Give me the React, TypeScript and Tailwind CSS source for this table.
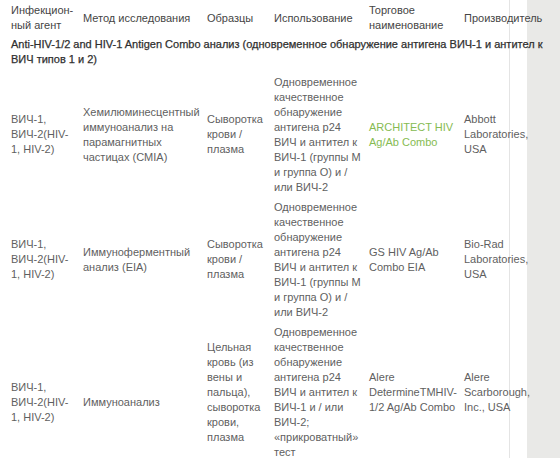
import React from "react";

const cols = "grid grid-cols-[80px_124px_67px_95px_95px_48px]";

function Lines({ lines }: { lines: string[] }) {
  return (
    <>
      {lines.map((l, i) => (
        <div key={i} className="whitespace-nowrap">
          {l}
        </div>
      ))}
    </>
  );
}

type Row = {
  a: string[];
  b: string[];
  c: string[];
  d: string[];
  e: string[];
  f: string[];
  green?: boolean;
  shift?: boolean;
};

const rows: Row[] = [
  {
    a: ["ВИЧ-1,", "ВИЧ-2(HIV-", "1, HIV-2)"],
    b: ["Хемилюминесцентный", "иммуноанализ на", "парамагнитных", "частицах (CMIA)"],
    c: ["Сыворотка", "крови /", "плазма"],
    d: [
      "Одновременное",
      "качественное",
      "обнаружение",
      "антигена p24",
      "ВИЧ и антител к",
      "ВИЧ-1 (группы М",
      "и группа О) и /",
      "или ВИЧ-2",
    ],
    e: ["ARCHITECT HIV", "Ag/Ab Combo"],
    f: ["Abbott", "Laboratories,", "USA"],
    green: true,
  },
  {
    a: ["ВИЧ-1,", "ВИЧ-2(HIV-", "1, HIV-2)"],
    b: ["Иммуноферментный", "анализ (EIA)"],
    c: ["Сыворотка", "крови /", "плазма"],
    d: [
      "Одновременное",
      "качественное",
      "обнаружение",
      "антигена p24",
      "ВИЧ и антител к",
      "ВИЧ-1 (группы М",
      "и группа О) и /",
      "или ВИЧ-2",
    ],
    e: ["GS HIV Ag/Ab", "Combo EIA"],
    f: ["Bio-Rad", "Laboratories,", "USA"],
  },
  {
    a: ["ВИЧ-1,", "ВИЧ-2(HIV-", "1, HIV-2)"],
    b: ["Иммуноанализ"],
    c: ["Цельная", "кровь (из", "вены и", "пальца),", "сыворотка", "крови,", "плазма"],
    d: [
      "Одновременное",
      "качественное",
      "обнаружение",
      "антигена p24",
      "ВИЧ и антител к",
      "ВИЧ-1 и / или",
      "ВИЧ-2;",
      "«прикроватный»",
      "тест",
    ],
    e: ["Alere", "DetermineTMHIV-", "1/2 Ag/Ab Combo"],
    f: ["Alere", "Scarborough,", "Inc., USA"],
    shift: true,
  },
];

export default function App() {
  return (
    <div
      className="w-[560px] h-[458px] overflow-hidden bg-[#e9e9e7] text-[11px] leading-[15px] text-[#5f5f5f]"
      style={{ fontFamily: '"Liberation Sans", Arial, sans-serif' }}
    >
      <div className="w-[527px] h-[458px] bg-[#ffffff]">
        <div className="w-[510px] h-[458px] border-r border-[#e4e4e4]">
          {/* header */}
          <div className={`${cols} items-center pt-[3px] text-[#454545]`}>
            <div className="pl-[11px]">
              <Lines lines={["Инфекцион-", "ный агент"]} />
            </div>
            <div className="pl-[3px]">
              <Lines lines={["Метод исследования"]} />
            </div>
            <div className="pl-[3px]">
              <Lines lines={["Образцы"]} />
            </div>
            <div className="pl-[3px]">
              <Lines lines={["Использование"]} />
            </div>
            <div className="pl-[3px]">
              <Lines lines={["Торговое", "наименование"]} />
            </div>
            <div className="pl-[3px]">
              <Lines lines={["Производитель"]} />
            </div>
          </div>
          {/* subheader */}
          <div className="pl-[11px] pt-[4px] pb-[5px] text-[#2f2f2f] [-webkit-text-stroke:0.25px_#2f2f2f]">
            <Lines
              lines={[
                "Anti-HIV-1/2 and HIV-1 Antigen Combo анализ (одновременное обнаружение антигена ВИЧ-1 и антител к",
                "ВИЧ типов 1 и 2)",
              ]}
            />
          </div>
          {rows.map((r, i) => (
            <div key={i} className={`${cols} items-center py-[2.5px]`}>
              <div className={`pl-[11px] ${r.shift ? "pt-[20px]" : ""}`}>
                <Lines lines={r.a} />
              </div>
              <div className={`pl-[3px] ${r.shift ? "pt-[20px]" : ""}`}>
                <Lines lines={r.b} />
              </div>
              <div className="pl-[3px]">
                <Lines lines={r.c} />
              </div>
              <div className="pl-[3px]">
                <Lines lines={r.d} />
              </div>
              <div className={`pl-[3px] ${r.green ? "text-[#86bb52]" : ""}`}>
                <Lines lines={r.e} />
              </div>
              <div className="pl-[3px]">
                <Lines lines={r.f} />
              </div>
            </div>
          ))}
        </div>
      </div>
    </div>
  );
}
